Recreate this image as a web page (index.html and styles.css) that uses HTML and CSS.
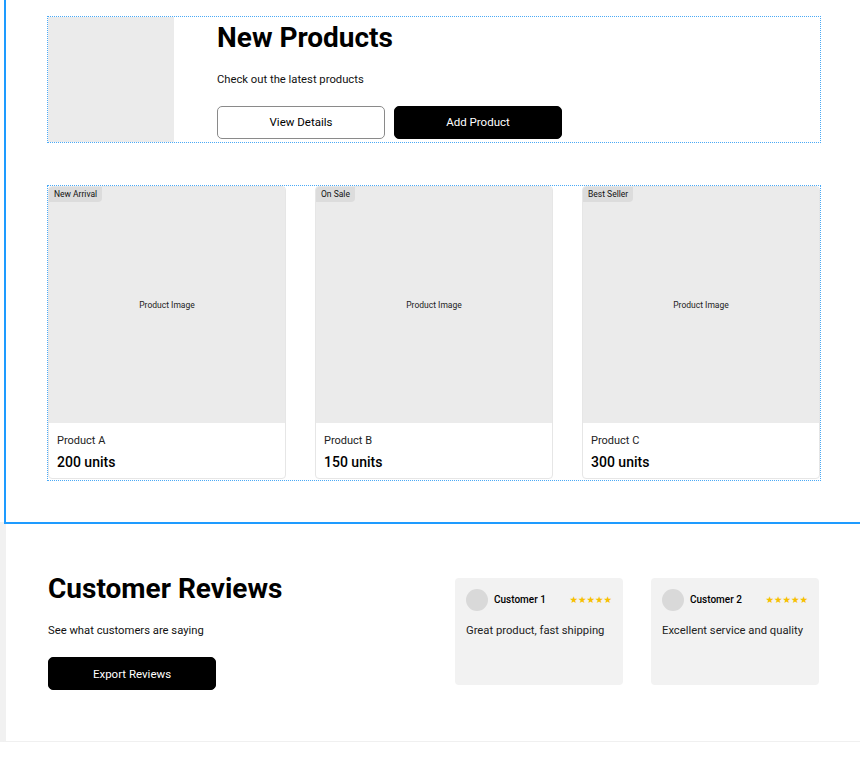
FILE: index.html
```html
<!DOCTYPE html>
<html lang="en">
<head>
    <meta charset="UTF-8">
    <meta name="viewport" content="width=device-width, initial-scale=1.0">
    <title>New Products</title>
    <link rel="stylesheet" href="styles.css">
</head>
<body>
    <section class="products-section">
        <div class="hero">
            <div class="hero-image"></div>
            <div class="hero-text">
                <h1 class="title">New Products</h1>
                <p class="subtitle">Check out the latest products</p>
                <div class="actions">
                    <button class="btn btn-outline">View Details</button>
                    <button class="btn btn-dark">Add Product</button>
                </div>
            </div>
        </div>

        <div class="product-grid">
            <div class="product-card">
                <div class="product-image">
                    <span class="badge">New Arrival</span>
                    Product Image
                </div>
                <div class="product-body">
                    <div class="product-name">Product A</div>
                    <div class="product-units">200 units</div>
                </div>
            </div>
            <div class="product-card">
                <div class="product-image">
                    <span class="badge">On Sale</span>
                    Product Image
                </div>
                <div class="product-body">
                    <div class="product-name">Product B</div>
                    <div class="product-units">150 units</div>
                </div>
            </div>
            <div class="product-card">
                <div class="product-image">
                    <span class="badge">Best Seller</span>
                    Product Image
                </div>
                <div class="product-body">
                    <div class="product-name">Product C</div>
                    <div class="product-units">300 units</div>
                </div>
            </div>
        </div>
    </section>

    <section class="reviews-section">
        <div class="reviews-intro">
            <h2 class="title">Customer Reviews</h2>
            <p class="subtitle">See what customers are saying</p>
            <button class="btn btn-dark">Export Reviews</button>
        </div>
        <div class="review-list">
            <div class="review-card">
                <div class="review-head">
                    <span class="avatar"></span>
                    <span class="reviewer">Customer 1</span>
                    <span class="stars">★★★★★</span>
                </div>
                <p class="review-text">Great product, fast shipping</p>
            </div>
            <div class="review-card">
                <div class="review-head">
                    <span class="avatar"></span>
                    <span class="reviewer">Customer 2</span>
                    <span class="stars">★★★★★</span>
                </div>
                <p class="review-text">Excellent service and quality</p>
            </div>
        </div>
    </section>
</body>
</html>
```

FILE: styles.css
```css
body {
    font-family: Roboto, "Liberation Sans", Arial, sans-serif;
    margin: 0;
    background-color: white;
    color: #000;
}
.title {
    font-size: 28px;
    font-weight: 700;
    line-height: 34px;
    margin: 0 0 16px;
}
.subtitle {
    font-size: 11.25px;
    line-height: 18px;
    margin: 0 0 17px;
    color: #111;
}
.btn {
    width: 168px;
    height: 33px;
    border-radius: 5px;
    font-family: inherit;
    font-size: 11.5px;
    font-weight: 400;
    cursor: pointer;
}
.btn-outline {
    background-color: white;
    color: #000;
    border: 1px solid #8a8a8a;
}
.btn-dark {
    background-color: #000;
    color: white;
    border: 1px solid #000;
}

/* selected section */
.products-section {
    margin-left: 6px;
    padding: 17px 40px 42px 42px;
    outline: 2px solid #1e9bff;
}
.hero {
    display: flex;
    align-items: center;
    gap: 43px;
    height: 125px;
    outline: 1px dotted #4aa9f6;
}
.hero-image {
    width: 126px;
    height: 100%;
    background-color: #ebebeb;
}
.actions {
    display: flex;
    gap: 9px;
}
.product-grid {
    display: grid;
    grid-template-columns: repeat(3, 1fr);
    gap: 29px;
    margin-top: 44px;
    padding-bottom: 1px;
    outline: 1px dotted #4aa9f6;
}
.product-card {
    border: 1px solid #e6e6e6;
    border-radius: 4px;
    overflow: hidden;
}
.product-image {
    position: relative;
    aspect-ratio: 1 / 1;
    background-color: #ebebeb;
    display: flex;
    align-items: center;
    justify-content: center;
    font-size: 8.5px;
    color: #222;
}
.badge {
    position: absolute;
    top: 0;
    left: 0;
    padding: 2px 5px 3px;
    background-color: #dcdcdc;
    border-bottom-right-radius: 4px;
    font-size: 8.5px;
    color: #111;
}
.product-body {
    padding: 10px 8px 6px;
}
.product-name {
    font-size: 11px;
    line-height: 16px;
    color: #222;
}
.product-units {
    font-size: 14px;
    font-weight: 500;
    line-height: 20px;
    margin-top: 3px;
}

.reviews-section {
    display: flex;
    align-items: center;
    justify-content: space-between;
    padding: 50px 41px 51px 42px;
    border-left: 6px solid #f1f1f1;
    border-bottom: 1px solid #f0f0f0;
}
.review-list {
    display: flex;
    gap: 28px;
}
.review-card {
    width: 168px;
    height: 107px;
    box-sizing: border-box;
    padding: 11px;
    background-color: #f2f2f2;
    border-radius: 4px;
}
.review-head {
    display: flex;
    align-items: center;
    gap: 6px;
}
.avatar {
    width: 22px;
    height: 22px;
    border-radius: 50%;
    background-color: #d9d9d9;
}
.reviewer {
    font-size: 10px;
    font-weight: 500;
}
.stars {
    margin-left: auto;
    font-family: "DejaVu Sans", sans-serif;
    font-size: 9.5px;
    color: #f7c000;
}
.review-text {
    margin: 11px 0 0;
    font-size: 11.25px;
    line-height: 18px;
    color: #222;
}
```
